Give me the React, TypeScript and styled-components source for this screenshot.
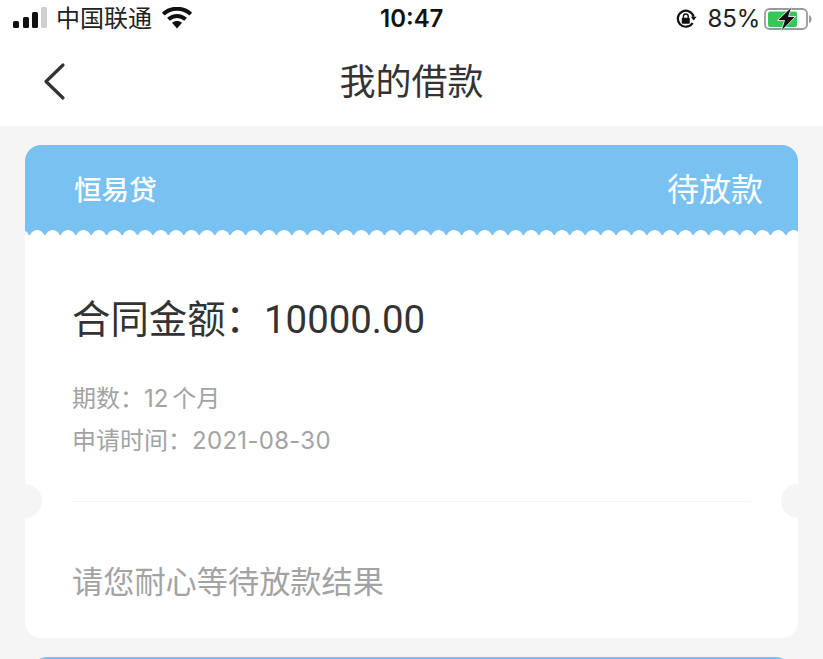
import React from 'react';
import styled, { createGlobalStyle } from 'styled-components';

const CJK = '"Inter", "Noto Sans CJK SC", sans-serif';

const GlobalStyle = createGlobalStyle`
  html, body {
    margin: 0;
    padding: 0;
    background: #f5f5f5;
  }
  body {
    font-family: ${CJK};
  }
`;

const Page = styled.div`
  width: 823px;
  height: 659px;
  overflow: hidden;
  background: #f5f5f5;
`;

const Header = styled.header`
  background: #ffffff;
  height: 126px;
`;

const StatusBar = styled.div`
  height: 38px;
  display: flex;
  align-items: center;
  justify-content: space-between;
  padding: 0 11px 0 13px;
  color: #111111;
  position: relative;
`;

const StatusGroup = styled.div`
  display: flex;
  align-items: center;
`;

const Carrier = styled.span`
  font-size: 24px;
  line-height: 38px;
  margin: 0 10px 0 9px;
  color: #222222;
`;

const Clock = styled.span`
  position: absolute;
  left: 380px;
  top: 0;
  font-size: 24px;
  line-height: 38px;
  font-weight: 600;
`;

const Percent = styled.span`
  font-size: 24px;
  line-height: 38px;
  margin: 0 4px 0 11px;
  letter-spacing: -0.2px;
  color: #222222;
`;

const NavBar = styled.nav`
  height: 88px;
  display: flex;
  align-items: center;
  justify-content: center;
  position: relative;
`;

const BackButton = styled.button`
  position: absolute;
  left: 43px;
  top: 24px;
  padding: 0;
  border: 0;
  background: none;
  display: flex;
`;

const Title = styled.h1`
  margin: 0;
  font-size: 36px;
  line-height: 86px;
  font-weight: 400;
  color: #333333;
`;

const Card = styled.section`
  position: relative;
  margin: 19px 25px 0;
  height: 493px;
  border-radius: 16px;
  background: #ffffff;
  overflow: hidden;
`;

const CardHead = styled.div`
  height: 90px;
  background: #78c1f0;
  display: flex;
  align-items: center;
  justify-content: space-between;
  padding: 0 35px 0 49px;
  box-sizing: border-box;
  color: #ffffff;
  position: relative;
`;

const Scallops = styled.div`
  position: absolute;
  left: -11.5px;
  right: 0;
  bottom: 0;
  height: 5px;
  background-image: radial-gradient(circle at 7.7px 7.5px, #ffffff 7px, transparent 7.7px);
  background-size: 15.45px 5px;
  background-repeat: repeat-x;
`;

const Lender = styled.span`
  font-size: 27.6px;
  line-height: 40px;
  font-weight: 500;
`;

const LoanState = styled.span`
  font-size: 32px;
  line-height: 44px;
`;

const CardBody = styled.div`
  padding: 0 47px;
`;

const Amount = styled.div`
  margin-top: 59px;
  font-size: 38.4px;
  line-height: 50px;
  color: #333333;
`;

const AmountValue = styled.span`
  font-family: Roboto, sans-serif;
`;

const Colon = styled.span`
  display: inline-block;
  transform: translateY(-0.02em);
`;

const Meta = styled.div`
  font-size: 24px;
  line-height: 42px;
  word-spacing: -3px;
  color: #a3a3a3;
`;

const MetaDate = styled.span`
  letter-spacing: 0.3px;
`;

const MetaList = styled.div`
  margin-top: 33px;
`;

const Divider = styled.hr`
  margin: 39px 0 0;
  border: 0;
  height: 1px;
  background: #f3f3f3;
`;

const Note = styled.div`
  margin-top: 55px;
  font-size: 31.2px;
  line-height: 50px;
  color: #a3a3a3;
`;

const Notch = styled.span<{ $side: 'left' | 'right' }>`
  position: absolute;
  top: 339px;
  ${(p) => p.$side}: -17px;
  width: 34px;
  height: 34px;
  border-radius: 50%;
  background: #f5f5f5;
`;

const NextCard = styled.div`
  margin: 19px 31px 0;
  height: 20px;
  border-radius: 16px 16px 0 0;
  background: #78c1f0;
`;

const SignalIcon = () => (
  <svg width="34" height="24" viewBox="0 0 34 24">
    <rect x="0" y="14" width="6" height="7" rx="1.5" fill="#111" />
    <rect x="10" y="10" width="6" height="11" rx="1.5" fill="#111" />
    <rect x="19" y="5" width="6" height="16" rx="1.5" fill="#111" />
    <rect x="28" y="0" width="6" height="21" rx="1.5" fill="#cfcfcf" />
  </svg>
);

const WifiIcon = () => (
  <svg width="30" height="24" viewBox="0 0 30 24">
    <path d="M1.200 7 C9 0 21 0 28.800 7" fill="none" stroke="#111" strokeWidth="4" />
    <path d="M6.400 12.200 C11.500 7.800 18.500 7.800 23.600 12.200" fill="none" stroke="#111" strokeWidth="4" />
    <path d="M10 15.800 C13 13.400 17 13.400 20 15.800 L15 21.500 Z" fill="#111" />
  </svg>
);

const RotationLockIcon = () => (
  <svg width="21" height="20" viewBox="0 0 21 20">
    <path d="M16.600 14 A8 8 0 1 1 17.600 7.800" fill="none" stroke="#111" strokeWidth="2.200" />
    <path d="M14.800 7.800 L20.600 7.800 L17.700 11.600 Z" fill="#111" />
    <rect x="5.800" y="8.800" width="8" height="6" rx="1" fill="#111" />
    <path d="M7.400 9 V7.400 A2.400 2.400 0 0 1 12.200 7.400 V9" fill="none" stroke="#111" strokeWidth="1.400" />
  </svg>
);

const BatteryIcon = () => (
  <svg width="48" height="26" viewBox="0 0 48 26">
    <rect x="1" y="3" width="42" height="20" rx="4.500" fill="#fff" stroke="#9a9a9a" strokeWidth="1.800" />
    <rect x="4" y="5.500" width="29" height="15.500" rx="2" fill="#35c759" />
    <path d="M45 9 C47 9.500 47.500 11.500 47.500 13 C47.500 14.500 47 16.500 45 17 Z" fill="#9a9a9a" />
    <path d="M28 0.500 L13.500 14.500 H20.500 L17 25.500 L31.500 10.500 H24.500 Z" fill="#111" stroke="#fff" strokeWidth="0.800" />
  </svg>
);

const BackIcon = () => (
  <svg width="24" height="40" viewBox="0 0 24 40">
    <path d="M20 3 L3 19.500 L20 36" fill="none" stroke="#333" strokeWidth="3.200" strokeLinecap="round" strokeLinejoin="round" />
  </svg>
);

const App: React.FC = () => {
  return (
    <Page>
      <GlobalStyle />
      <Header>
        <StatusBar>
          <StatusGroup>
            <SignalIcon />
            <Carrier>中国联通</Carrier>
            <WifiIcon />
          </StatusGroup>
          <Clock>10:47</Clock>
          <StatusGroup>
            <RotationLockIcon />
            <Percent>85%</Percent>
            <BatteryIcon />
          </StatusGroup>
        </StatusBar>
        <NavBar>
          <BackButton aria-label="返回">
            <BackIcon />
          </BackButton>
          <Title>我的借款</Title>
        </NavBar>
      </Header>
      <Card>
        <CardHead>
          <Lender>恒易贷</Lender>
          <LoanState>待放款</LoanState>
          <Scallops />
        </CardHead>
        <CardBody>
          <Amount>
            合同金额<Colon>：</Colon>
            <AmountValue>10000.00</AmountValue>
          </Amount>
          <MetaList>
            <Meta>
              期数<Colon>：</Colon>12 个月
            </Meta>
            <Meta>
              申请时间<Colon>：</Colon>
              <MetaDate>2021-08-30</MetaDate>
            </Meta>
          </MetaList>
          <Divider />
          <Note>请您耐心等待放款结果</Note>
        </CardBody>
        <Notch $side="left" />
        <Notch $side="right" />
      </Card>
      <NextCard />
    </Page>
  );
};

export default App;
